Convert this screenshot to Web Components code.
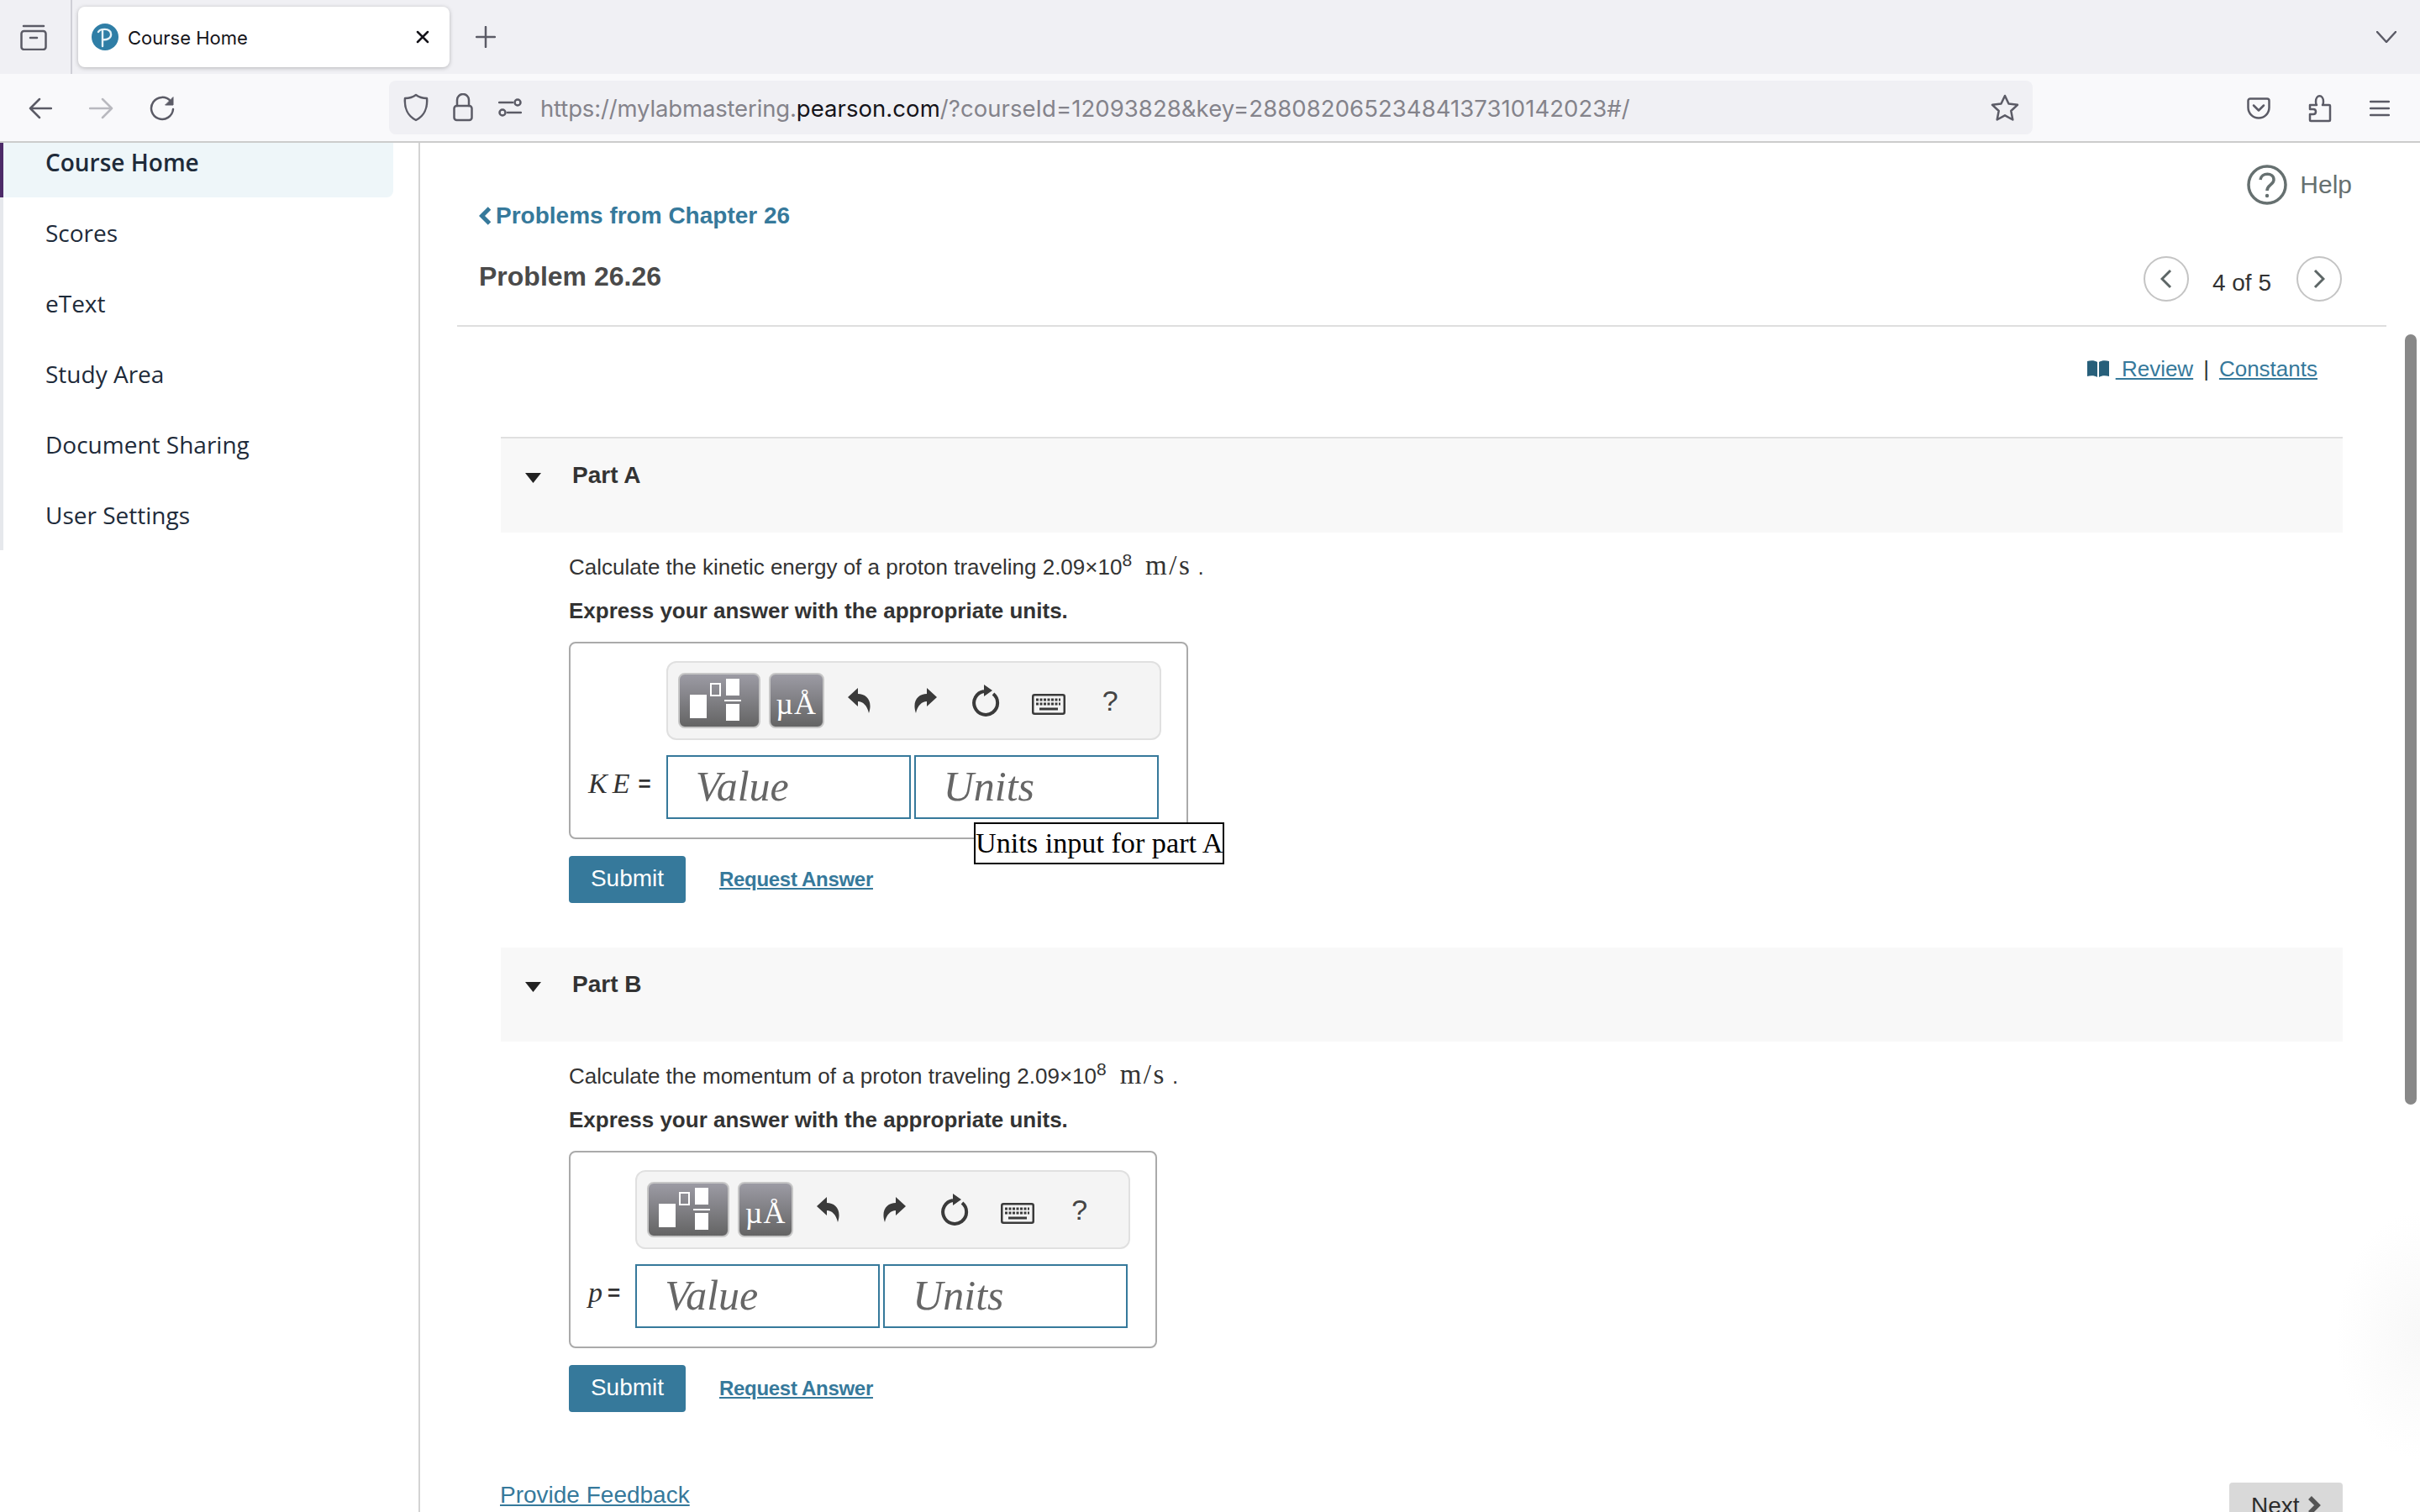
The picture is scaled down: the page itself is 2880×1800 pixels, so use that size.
<!DOCTYPE html>
<html lang="en">
<head>
<meta charset="utf-8">
<title>Course Home</title>
<style>
  html, body { margin: 0; height: 1800px; overflow: hidden; background: #fff; }
  body { font-family: "Liberation Sans", Arial, sans-serif; }
  browser-chrome { height: 170px; }
  .shell { display: flex; height: 1630px; overflow: hidden; }
</style>
</head>
<body>
<browser-chrome></browser-chrome>
<div class="shell">
  <course-sidebar></course-sidebar>
  <problem-page>
    <part-section heading="Part A" first label="KE" tip="Units input for part A">
      Calculate the kinetic energy of a proton traveling <speed-value></speed-value>
    </part-section>
    <part-section heading="Part B" label="p">
      Calculate the momentum of a proton traveling <speed-value></speed-value>
    </part-section>
  </problem-page>
</div>

<script>
class BrowserChrome extends HTMLElement {
  constructor() {
    super();
    this.root = this.attachShadow({ mode: "open" });
    this.root.innerHTML = `
      <style>
        :host { display: block; font-family: Inter, "Liberation Sans", sans-serif; }
        svg { display: block; fill: none; stroke: #5b5b66; stroke-width: 2.5; stroke-linecap: round; stroke-linejoin: round; flex: none; }
        .tabs { height: 88px; background: #f0f0f4; display: flex; align-items: flex-start; }
        .tabs-menu { margin: 29px 0 0 24px; }
        .sep { width: 2px; height: 88px; background: #cfcfd6; margin-left: 28px; }
        .tab {
          width: 442px; height: 72px; margin: 8px 0 0 7px; box-sizing: border-box;
          background: #fff; border-radius: 8px; box-shadow: 0 1px 5px #00000040;
          display: flex; align-items: center; padding: 0 24px 0 16px; color: #15141a; font-size: 22px;
        }
        .tab span { margin: 2px 0 0 11px; flex: 1; }
        .plus { margin: 31px 0 0 31px; }
        .more { margin: 37px 28px 0 auto; }
        .bar { height: 78px; padding-top: 2px; background: #f9f9fb; display: flex; align-items: center; border-bottom: 2px solid #cccccc; }
        .back { margin-left: 34px; }
        .fwd { margin-left: 44px; stroke: #b9b9bf; }
        .reload { margin-left: 43px; }
        .url {
          width: 1956px; height: 64px; margin: -2px 0 0 255px; box-sizing: border-box; background: #f0f0f4; border-radius: 8px;
          display: flex; align-items: center; padding: 0 16px 0 17px; font-size: 27.5px; color: #84838b; white-space: nowrap;
        }
        .url b { font-weight: 400; color: #15141a; }
        .url .addr { margin: 2px 0 0 22px; flex: 1; letter-spacing: 0.06px; }
        .url .host { letter-spacing: -0.15px; }
        .lock { margin-left: 29px; }
        .perm { margin-left: 30px; }
        .pocket { margin-left: 255px; }
        .puzzle { margin-left: 45px; }
        .menu { margin-left: 45px; }
      </style>
      <div class="tabs">
        <svg class="tabs-menu" width="32" height="31" viewBox="0 0 32 31"><path d="M4 2h24"/><rect x="1.5" y="8" width="29" height="22" rx="3"/><path d="M12 16h8"/></svg>
        <div class="sep"></div>
        <div class="tab">
          <svg width="32" height="32" viewBox="0 0 32 32" style="stroke:none"><circle cx="16" cy="16" r="16" fill="#2f7ea6"/><path d="M8 10c2-4 14-5 15 2 1 6-6 8-10 7M13 8v19" fill="none" stroke="#e6f2f7" stroke-width="2.4"/></svg>
          <span>Course Home</span>
          <svg width="16" height="16" viewBox="0 0 16 16" style="stroke:#15141a"><path d="M2 2l12 12M14 2L2 14"/></svg>
        </div>
        <svg class="plus" width="24" height="26" viewBox="0 0 24 26"><path d="M12 1v24M1 13h22"/></svg>
        <svg class="more" width="24" height="14" viewBox="0 0 24 14"><path d="M1 1l11 12L23 1"/></svg>
      </div>
      <div class="bar">
        <svg class="back" width="28" height="26" viewBox="0 0 28 26"><path d="M27 13H2M13 2L2 13l11 11"/></svg>
        <svg class="fwd" width="29" height="26" viewBox="0 0 29 26"><path d="M1 13h26M16 2l11 11-11 11"/></svg>
        <svg class="reload" width="30" height="30" viewBox="0 0 30 30"><path d="M25 6.5A13 13 0 1 0 28 16"/><path d="M28 2v9h-9z" fill="#5b5b66" stroke-width="1"/></svg>
        <div class="url">
          <svg width="30" height="34" viewBox="0 0 30 34"><path d="M15 2c4 3 8 4 13 4 1 11-3 21-13 26C5 27 1 17 2 6c5 0 9-1 13-4z"/></svg>
          <svg class="lock" width="24" height="34" viewBox="0 0 24 34"><path d="M5 15V8a7 7 0 0 1 14 0v7"/><rect x="1.5" y="15" width="21" height="17" rx="3"/></svg>
          <svg class="perm" width="28" height="22" viewBox="0 0 28 22"><path d="M1 5h16M11 17h16"/><circle cx="23" cy="5" r="3.5"/><circle cx="5" cy="17" r="3.5"/></svg>
          <span class="addr"><span class="host">https://mylabmastering.</span><b>pearson.com</b>/?courseId=12093828&amp;key=28808206523484137310142023#/</span>
          <svg width="34" height="32" viewBox="0 0 34 32"><path d="M17 2l4.5 9.5 10.5 1.300-7.700 7.200 2 10.500L17 25.300 7.700 30.500l2-10.500L2 12.800l10.500-1.300z"/></svg>
        </div>
        <svg class="pocket" width="28" height="26" viewBox="0 0 28 26"><path d="M4 1.500h20a2.500 2.500 0 0 1 2.500 2.500v8a12.500 12.500 0 0 1-25 0V4A2.500 2.500 0 0 1 4 1.500z"/><path d="M8 9.500l6 6 6-6"/></svg>
        <svg class="puzzle" width="28" height="34" viewBox="0 0 28 34"><path d="M2 13h8c-1-1-1-2-1-4 0-9 9-9 9 0 0 2 0 3-1 4h8a1 1 0 0 1 1 1v17a1 1 0 0 1-1 1H3a1 1 0 0 1-1-1v-7h4c4 0 4-6 0-6H2z"/></svg>
        <svg class="menu" width="24" height="20" viewBox="0 0 24 20"><path d="M1 2h22M1 10h22M1 18h22"/></svg>
      </div>
    `;
  }
}

class CourseSidebar extends HTMLElement {
  constructor() {
    super();
    this.root = this.attachShadow({ mode: "open" });
    const items = ["Course Home", "Scores", "eText", "Study Area", "Document Sharing", "User Settings"];
    this.root.innerHTML = `
      <style>
        :host { display: block; width: 498px; flex: none; border-right: 2px solid #d4d4d4; overflow: hidden; font-family: "Open Sans", sans-serif; font-size: 28px; color: #1e2b3a; }
        ul { list-style: none; margin: -19px 0 0; padding: 0; border-left: 4px solid #e6e8ec; }
        li { height: 84px; margin-right: 26px; padding: 0 0 1px 50px; display: flex; align-items: center; box-sizing: border-box; }
        li.active { background: #eef6f9; font-weight: 600; border-bottom-right-radius: 8px; margin: 0 30px 0 -4px; padding-left: 50px; border-left: 4px solid #4c2a68; }
      </style>
      <ul>${items.map((t, i) => `<li class="${i === 0 ? "active" : ""}">${t}</li>`).join("")}</ul>
    `;
  }
}

class ProblemPage extends HTMLElement {
  constructor() {
    super();
    this.root = this.attachShadow({ mode: "open" });
    this.root.innerHTML = `
      <style>
        :host { display: block; flex: 1; position: relative; overflow: hidden; font-family: "Liberation Sans", Arial, sans-serif; color: #333; }
        a { color: #36799b; }
        header { margin: 0 40px 0 44px; height: 217px; box-sizing: content-box; border-bottom: 2px solid #dedede; display: flex; justify-content: space-between; }
        .left { padding: 71px 0 0 26px; }
        .back { display: flex; align-items: center; gap: 5px; height: 32px; font: bold 28px/32px "Liberation Sans", sans-serif; color: #36799b; }
        h1 { margin: 37px 0 0; font: bold 32px/38px "Liberation Sans", sans-serif; color: #4a4a4a; }
        .right { padding-top: 26px; display: flex; flex-direction: column; align-items: flex-end; }
        .help { display: flex; align-items: center; gap: 15px; height: 48px; padding-right: 41px; font-size: 30px; color: #667070; }
        .pager { display: flex; align-items: center; margin-top: 61px; padding-right: 53px; font-size: 28px; }
        .pager span { margin: 10px 30px 0 28px; }
        .circle { width: 54px; height: 54px; box-sizing: border-box; border: 2px solid #c4c4c4; border-radius: 50%; display: flex; align-items: center; justify-content: center; }
        .resources { display: flex; justify-content: flex-end; align-items: center; margin: 35px 122px 0 0; font-size: 26px; line-height: 30px; }
        .resources .bar { margin: 0 12px; }
        .resources svg { margin-right: 8px; }
        .parts { margin: 66px 92px 0 96px; }
        footer { display: flex; justify-content: space-between; align-items: flex-start; margin: 83px 92px 0 95px; }
        footer a { font-size: 28px; line-height: 32px; }
        .next { margin-top: 1px; width: 135px; height: 60px; box-sizing: border-box; background: #d9d9d9; border-radius: 4px; display: flex; gap: 8px; padding: 12px 0 0 26px; font-size: 28px; line-height: 32px; color: #2b2b2b; }
        .next svg { margin-top: 3px; }
        .thumb { position: absolute; top: 228px; right: 4px; width: 14px; height: 917px; border-radius: 7px; background: #888; }
        .shade { position: absolute; right: 0; top: 1270px; width: 100px; height: 300px; background: radial-gradient(ellipse at right, #f8f8f8, #fff0 70%); }
      </style>
      <header>
        <div class="left">
          <div class="back">
            <svg width="15" height="22" viewBox="0 0 15 22"><path d="M12.500 2L3.500 11l9 9" fill="none" stroke="#36799b" stroke-width="5"/></svg>
            Problems from Chapter 26
          </div>
          <h1>Problem 26.26</h1>
        </div>
        <div class="right">
          <div class="help">
            <svg width="48" height="48" viewBox="0 0 48 48"><circle cx="24" cy="24" r="22" fill="none" stroke="#667070" stroke-width="3.500"/><path d="M16 18c1-9 16-9 16 0 0 6-8 6-8 13" fill="none" stroke="#667070" stroke-width="3.500"/><circle cx="24" cy="37" r="2.200" fill="#667070"/></svg>
            Help
          </div>
          <div class="pager">
            <div class="circle"><svg width="14" height="24" viewBox="0 0 14 24"><path d="M12 2L2 12l10 10" fill="none" stroke="#5d6666" stroke-width="3"/></svg></div>
            <span>4 of 5</span>
            <div class="circle"><svg width="14" height="24" viewBox="0 0 14 24"><path d="M2 2l10 10L2 22" fill="none" stroke="#5d6666" stroke-width="3"/></svg></div>
          </div>
        </div>
      </header>
      <div class="resources">
        <svg width="26" height="20" viewBox="0 0 26 20"><path d="M0 1c4-1 9-1 12 1v18c-3-2-8-2-12-1zM26 1c-4-1-9-1-12 1v18c3-2 8-2 12-1z" fill="#275f7a"/></svg>
        <a href="#">&nbsp;Review</a><span class="bar">|</span><a href="#">Constants</a>
      </div>
      <div class="parts"><slot></slot></div>
      <footer>
        <a href="#">Provide Feedback</a>
        <div class="next">Next
          <svg width="18" height="24" viewBox="0 0 18 24"><path d="M4 3l9 9-9 9" fill="none" stroke="#555" stroke-width="5.500"/></svg>
        </div>
      </footer>
      <div class="shade"></div>
      <div class="thumb"></div>
    `;
  }
}

class SpeedValue extends HTMLElement {
  constructor() {
    super();
    this.root = this.attachShadow({ mode: "open" });
    this.root.innerHTML = `
      <style>
        :host { display: inline; }
        sup { font-size: 21px; line-height: 0; vertical-align: 10px; }
        .unit { font-family: "Liberation Serif", serif; font-size: 33px; margin-left: 16px; letter-spacing: 2.5px; }
      </style>
      2.09×10<sup>8</sup><span class="unit">m/s</span> .
    `;
  }
}

class PartSection extends HTMLElement {
  constructor() {
    super();
    this.root = this.attachShadow({ mode: "open" });
  }
  connectedCallback() {
    this.root.innerHTML = `
      <style>
        :host { display: block; margin-bottom: 53px; }
        .head { height: 112px; box-sizing: content-box; background: #f8f8f8; display: flex; padding-left: 29px; }
        :host([first]) .head { border-top: 2px solid #e0e0e0; }
        .head svg { margin: 41px 37px 0 0; }
        h2 { margin: 28px 0 0; font: bold 28px/32px "Liberation Sans", sans-serif; color: #333; }
        .body { padding: 24px 0 0 81px; font-size: 26px; line-height: 30px; color: #333; }
        .prompt { height: 30px; white-space: nowrap; }
        .note { margin: 24px 0 22px; font-weight: bold; }
        .actions { display: flex; align-items: center; margin-top: 20px; }
        .submit { width: 139px; height: 56px; border-radius: 4px; background: #36799b; color: #fff; font-size: 28px; display: flex; align-items: center; justify-content: center; padding-bottom: 2px; box-sizing: border-box; }
        .actions a { margin-left: 40px; font: bold 24px/30px "Liberation Sans", sans-serif; letter-spacing: -0.3px; color: #36799b; }
      </style>
      <div class="head">
        <svg width="19" height="12" viewBox="0 0 19 12"><path d="M0 0h19l-9.500 12z" fill="#222"/></svg>
        <h2>${this.getAttribute("heading")}</h2>
      </div>
      <div class="body">
        <div class="prompt"><slot></slot></div>
        <div class="note">Express your answer with the appropriate units.</div>
        <answer-box label="${this.getAttribute("label")}" tip="${this.getAttribute("tip") || ""}"></answer-box>
        <div class="actions"><div class="submit">Submit</div><a href="#">Request Answer</a></div>
      </div>
    `;
  }
}

class AnswerBox extends HTMLElement {
  constructor() {
    super();
    this.root = this.attachShadow({ mode: "open" });
  }
  connectedCallback() {
    const tip = this.getAttribute("tip");
    const label = this.getAttribute("label");
    this.root.innerHTML = `
      <style>
        :host { display: table; position: relative; }
        .box { display: grid; grid-template-columns: auto auto; column-gap: 18px; row-gap: 18px; padding: 21px 30px 22px 20px; border: 2px solid #aaa; border-radius: 8px; }
        .label { grid-column: 1; display: flex; align-items: center; gap: ${label.length > 1 ? 4 : 0}px; padding: 0 0 8px 1px; color: #333; white-space: nowrap; }
        .label i { font: italic 34px "Liberation Serif", serif; letter-spacing: 6px; }
        .label span { font-size: 26px; font-weight: bold; }
        math-toolbar { grid-column: 2; }
        .inputs { grid-column: 2; display: flex; gap: 4px; }
        .field { width: 291px; height: 76px; box-sizing: border-box; border: 2px solid #36799b; padding: 0 0 0 33px; font: italic 50px/70px "Liberation Serif", serif; color: #666; }
        .tip { position: absolute; left: 482px; top: 215px; box-sizing: border-box; height: 50px; border: 2px solid #000; background: #fff; color: #000; font: 34.2px/46px "Liberation Serif", serif; white-space: nowrap; }
      </style>
      <div class="box">
        <math-toolbar></math-toolbar>
        <div class="label"><i>${label}</i><span>=</span></div>
        <div class="inputs">
          <div class="field">Value</div>
          <div class="field">Units</div>
        </div>
      </div>
      ${tip ? `<div class="tip">${tip}</div>` : ""}
    `;
  }
}

class MathToolbar extends HTMLElement {
  constructor() {
    super();
    this.root = this.attachShadow({ mode: "open" });
    this.root.innerHTML = `
      <style>
        :host { display: flex; align-items: center; width: 589px; height: 94px; box-sizing: border-box; padding-left: 12px; background: #f4f4f4; border: 2px solid #e0e0e0; border-radius: 12px; color: #3a3a3a; }
        svg { display: block; flex: none; }
        .btn { height: 66px; border-radius: 8px; box-sizing: border-box; border: 2px solid #c6c6c6; background: linear-gradient(#9c9ba4, #646464); flex: none; color: #fff; }
        .tpl { width: 98px; }
        .sym { width: 66px; margin-left: 10px; font: 36px/70px "Liberation Serif", serif; text-align: center; letter-spacing: 1px; }
        .q { margin-left: 44px; font-size: 34px; color: #444; }
      </style>
      <div class="btn tpl">
        <svg width="94" height="62" viewBox="0 0 94 62" fill="#fff">
          <rect x="12" y="24" width="20" height="28"/>
          <rect x="37" y="11" width="11" height="14" fill="none" stroke="#fff" stroke-width="2"/>
          <rect x="55" y="5" width="16" height="20"/>
          <rect x="53" y="30" width="20" height="2"/>
          <rect x="55" y="35" width="16" height="20"/>
        </svg>
      </div>
      <div class="btn sym">µÅ</div>
      <svg style="margin-left:28px" width="28" height="32" viewBox="0 0 28 32"><path d="M0 12L12 1v7c10 0 18 8 13 23-2-9-7-14-13-14v6z" fill="#3a3a3a"/></svg>
      <svg style="margin-left:50px" width="28" height="32" viewBox="0 0 28 32"><path d="M28 12L16 1v7C6 8-2 16 3 31c2-9 7-14 13-14v6z" fill="#3a3a3a"/></svg>
      <svg style="margin-left:42px" width="33" height="38" viewBox="0 0 33 38"><path d="M25 11a14 14 0 1 1-11-3" fill="none" stroke="#3a3a3a" stroke-width="4"/><path d="M14 0l10 7-10 7z" fill="#3a3a3a"/></svg>
      <svg style="margin:8px 0 0 38px" width="40" height="25" viewBox="0 0 40 25">
        <rect x="1.250" y="1.250" width="37.500" height="22.500" rx="2" fill="none" stroke="#3a3a3a" stroke-width="2.500"/>
        <path d="M5 7h29M5 12h29" stroke="#3a3a3a" stroke-width="3" stroke-dasharray="3 1.500"/>
        <path d="M9 18h22" stroke="#3a3a3a" stroke-width="3"/>
      </svg>
      <span class="q">?</span>
    `;
  }
}

customElements.define("browser-chrome", BrowserChrome);
customElements.define("course-sidebar", CourseSidebar);
customElements.define("problem-page", ProblemPage);
customElements.define("speed-value", SpeedValue);
customElements.define("part-section", PartSection);
customElements.define("answer-box", AnswerBox);
customElements.define("math-toolbar", MathToolbar);
</script>
</body>
</html>
